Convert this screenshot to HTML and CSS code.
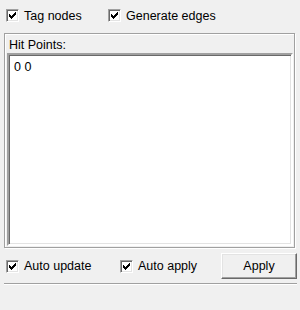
FILE: index.html
```html
<!DOCTYPE html>
<html>
<head>
<meta charset="utf-8">
<link rel="stylesheet" href="styles.css">
</head>
<body>
<div class="panel">
  <div class="row top">
    <label class="cb first">
      <span class="box"><svg width="7" height="7" viewBox="0 0 7 7"><g fill="#000"><rect x="0" y="2" width="1" height="3"/><rect x="1" y="3" width="1" height="3"/><rect x="2" y="4" width="1" height="3"/><rect x="3" y="3" width="1" height="3"/><rect x="4" y="2" width="1" height="3"/><rect x="5" y="1" width="1" height="3"/><rect x="6" y="0" width="1" height="3"/></g></svg></span>
      <span class="txt">Tag nodes</span>
    </label>
    <label class="cb">
      <span class="box"><svg width="7" height="7" viewBox="0 0 7 7"><g fill="#000"><rect x="0" y="2" width="1" height="3"/><rect x="1" y="3" width="1" height="3"/><rect x="2" y="4" width="1" height="3"/><rect x="3" y="3" width="1" height="3"/><rect x="4" y="2" width="1" height="3"/><rect x="5" y="1" width="1" height="3"/><rect x="6" y="0" width="1" height="3"/></g></svg></span>
      <span class="txt">Generate edges</span>
    </label>
  </div>
  <div class="group">
    <div class="legend">Hit Points:</div>
    <div class="textarea">0 0</div>
  </div>
  <div class="row bottom">
    <label class="cb second">
      <span class="box"><svg width="7" height="7" viewBox="0 0 7 7"><g fill="#000"><rect x="0" y="2" width="1" height="3"/><rect x="1" y="3" width="1" height="3"/><rect x="2" y="4" width="1" height="3"/><rect x="3" y="3" width="1" height="3"/><rect x="4" y="2" width="1" height="3"/><rect x="5" y="1" width="1" height="3"/><rect x="6" y="0" width="1" height="3"/></g></svg></span>
      <span class="txt">Auto update</span>
    </label>
    <label class="cb third">
      <span class="box"><svg width="7" height="7" viewBox="0 0 7 7"><g fill="#000"><rect x="0" y="2" width="1" height="3"/><rect x="1" y="3" width="1" height="3"/><rect x="2" y="4" width="1" height="3"/><rect x="3" y="3" width="1" height="3"/><rect x="4" y="2" width="1" height="3"/><rect x="5" y="1" width="1" height="3"/><rect x="6" y="0" width="1" height="3"/></g></svg></span>
      <span class="txt">Auto apply</span>
    </label>
    <button class="btn">Apply</button>
  </div>
  <div class="sep"></div>
</div>
</body>
</html>
```
FILE: styles.css
```css
html, body {
  margin: 0;
  padding: 0;
  background: #f0f0f0;
  width: 300px;
  height: 310px;
  overflow: hidden;
}
.panel {
  font-family: "Liberation Sans", Arial, sans-serif;
  font-size: 12.5px;
  color: #000;
  padding-top: 9px;
}
.row {
  display: flex;
  align-items: center;
  padding-left: 6px;
}
.top {
  height: 13px;
}
.cb {
  display: flex;
  align-items: center;
  gap: 5px;
  line-height: 14px;
  white-space: nowrap;
}
.first {
  width: 102px;
}
.second {
  width: 114px;
}
.third {
  width: 101px;
}
.box {
  box-sizing: border-box;
  width: 13px;
  height: 13px;
  flex: none;
  background: #fff;
  border: 1px solid;
  border-color: #a0a0a0 #fff #fff #a0a0a0;
  box-shadow: inset 1px 1px 0 #696969, inset -1px -1px 0 #e3e3e3;
  display: flex;
  align-items: center;
  justify-content: center;
}
.box svg {
  display: block;
}
.group {
  box-sizing: border-box;
  margin: 11px 0 0 4px;
  width: 291px;
  height: 215px;
  border: 1px solid #a0a0a0;
  box-shadow: 1px 1px 0 #fff, inset 1px 1px 0 #fff;
  padding: 4px 1px 1px 2px;
  display: flex;
  flex-direction: column;
}
.legend {
  height: 15px;
  line-height: 15px;
  padding-left: 2px;
}
.textarea {
  box-sizing: border-box;
  height: 193px;
  background: #fff;
  border: 2px solid;
  border-color: #a0a0a0 #fff #fff #a0a0a0;
  box-shadow: inset 1px 1px 0 #696969, inset -1px -1px 0 #e3e3e3;
  padding: 5px 0 0 5px;
  line-height: 14px;
}
.bottom {
  margin-top: 5px;
  height: 26px;
}
.btn {
  box-sizing: border-box;
  width: 76px;
  height: 26px;
  margin: 0;
  padding: 0;
  font: inherit;
  color: #000;
  background: #f0f0f0;
  border: 1px solid;
  border-color: #fff #696969 #696969 #fff;
  box-shadow: inset -1px -1px 0 #a0a0a0, inset 1px 1px 0 #e3e3e3;
}
.sep {
  margin: 4px 0 0 4px;
  width: 293px;
  height: 1px;
  background: #a0a0a0;
  border-bottom: 1px solid #fff;
}
```
